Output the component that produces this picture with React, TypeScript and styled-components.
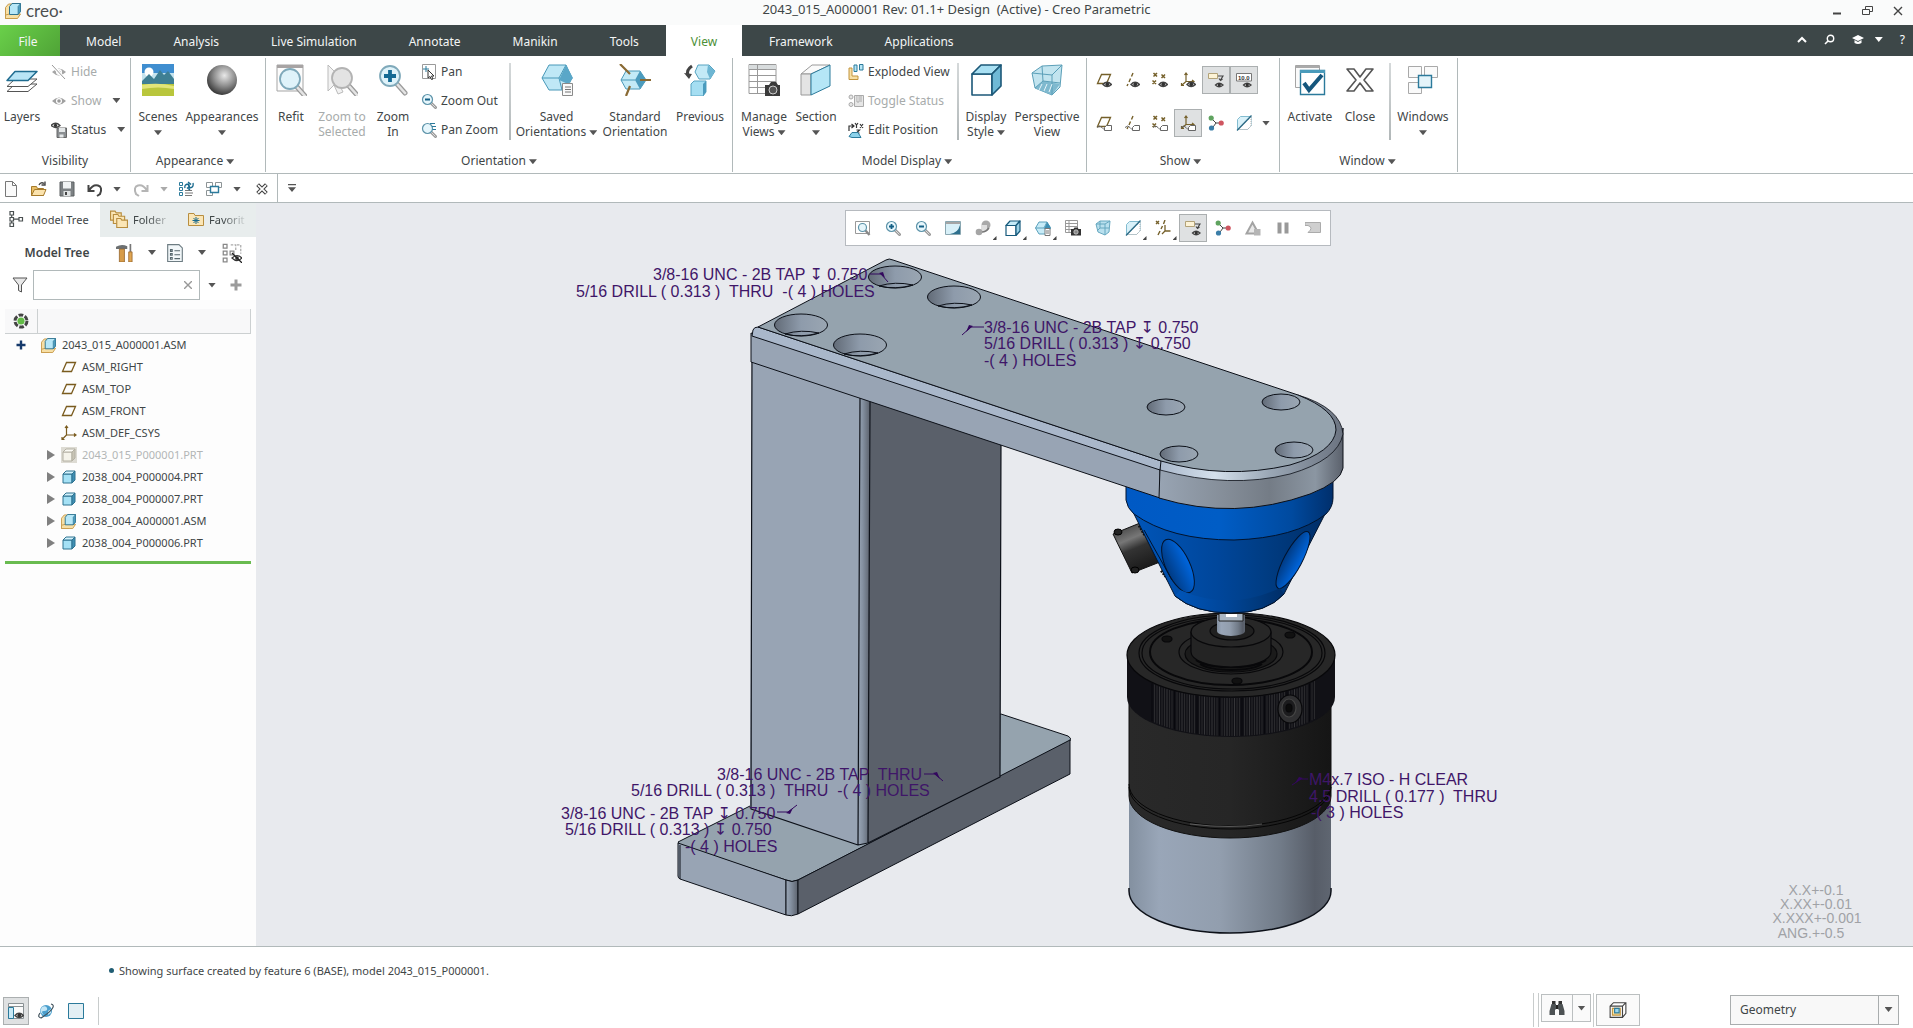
import React from 'react';
import styled, { createGlobalStyle } from 'styled-components';

const ink = '#3f4647';
const line = '#b1b9ba';
const teal = '#2b7a9b';

const GlobalStyle = createGlobalStyle`
  * { box-sizing: border-box; }
  html, body { margin: 0; height: 100%; }
  body {
    font: 12px/15px "Noto Sans", "Open Sans", sans-serif;
    color: ${ink};
    background: #fff;
    overflow: hidden;
  }
  button, input, select { font: inherit; color: inherit; }
  button { border: 0; padding: 0; margin: 0; background: none; cursor: default; }
  svg { display: block; flex: none; }
`;

/* ---------- icons ---------- */

const brown = '#75602a';

const Eye = () => (
  <g>
    <path d="M7 12.5q4-4.500 8.500 0q-4.500 4-8.500 0z" fill="#fff" stroke="#444" strokeWidth="1.4" />
    <circle cx="11.3" cy="12.3" r="1.9" fill="#333" />
  </g>
);
const Tag = () => (
  <g>
    <path d="M8.5 15.5v-3l2-2h5v5z" fill="#fff" stroke="#666" />
    <path d="M1 12.5q3-3 5 0t3 1" fill="none" stroke="#666" />
  </g>
);
const Glass = ({ fill = '#dff3fa', edge = '#7fa9ba' }: { fill?: string; edge?: string }) => (
  <g>
    <path d="M20 20l8 9" stroke="#9a9a9a" strokeWidth="5" strokeLinecap="round" />
    <path d="M20 20l8 9" stroke="#e4e4e4" strokeWidth="2.6" strokeLinecap="round" />
    <circle cx="13" cy="12" r="10" fill={fill} stroke={edge} strokeWidth="1.8" />
  </g>
);
const SmallGlass = () => (
  <g>
    <path d="M10 10l4.500 4.500" stroke="#999" strokeWidth="3" strokeLinecap="round" />
    <path d="M10 10l4.500 4.500" stroke="#ddd" strokeWidth="1" />
    <circle cx="6.500" cy="6.500" r="5" fill="#e6f6fc" stroke="#5c93a9" strokeWidth="1.200" />
  </g>
);
const PlaneMark = () => <path d="M1.500 11.500L5.500 2.500H14.500L10.500 11.500z" fill="none" stroke={brown} strokeWidth="1.300" />;
const AxisMark = () => <path d="M9 1L7.500 4.500M6.500 6.500L5 10M4 12L3 14" stroke={brown} strokeWidth="1.400" />;
const PointsMark = () => (
  <path d="M1.500 1l3.500 3.500m0-3.500l-3.500 3.500M9.500 2.500l3.500 3.500m0-3.500l-3.500 3.500M.5 8.500l3.500 3.500m0-3.500l-3.500 3.500" stroke={brown} strokeWidth="1.500" />
);
const CsysMark = () => (
  <path d="M6 1v8.500h8M6 9.500L1.500 13.500M4.500 3L6 1l1.500 2M12 8l2 1.500-2 1.500M1.500 11v2.500H4" fill="none" stroke={brown} strokeWidth="1.200" />
);
const Cube = ({ front = '#a5e1f5', top = '#d3f2fc', side = '#3f8fb3', edge = '#2f7390' }) => (
  <g stroke={edge} strokeLinejoin="round">
    <path d="M2 5h9v9H2z" fill={front} />
    <path d="M2 5l3-3h9l-3 3z" fill={top} />
    <path d="M11 5l3-3v9l-3 3z" fill={side} />
  </g>
);
const Assembly = () => (
  <g strokeLinejoin="round">
    <path d="M.5 4.500l3-3.500h5v10l-.5 4.500H.5z" fill="#f7dfa5" stroke="#c89b4b" />
    <path d="M.5 12l4-1h11l-3 4.500H.5z" fill="#f7dfa5" stroke="#c89b4b" />
    <path d="M4.500 3.500l2.500-3h8.500v8l-2.500 3H4.500z" fill="#b7e7f7" stroke="#2f7390" />
    <path d="M13 3.500l2.500-3v8l-2.500 3z" fill="#4d9cbd" stroke="#2f7390" strokeWidth=".6" />
  </g>
);
const Nodes = () => (
  <g>
    <path d="M3 3l5 5-4 5.500M8 8h5" fill="none" stroke="#444" />
    <circle cx="3.200" cy="3" r="2.600" fill="#5fa35f" />
    <circle cx="3.500" cy="13" r="2.600" fill="#3b7ea8" />
    <circle cx="13.200" cy="8" r="2.600" fill="#cf5560" />
  </g>
);
const SectionMark = () => (
  <g>
    <path d="M1.500 4.500l3-3H15V11l-3.500 3.500h-10z" fill="#d9f1f9" stroke="#83bcd0" />
    <path d="M2 14.500L15 2v9l-3.500 3.500z" fill="#fff" stroke="#aaa" strokeDasharray="1 1" />
    <path d="M1 15.500L15.500.5" stroke="#2a6a86" strokeWidth="1.300" />
  </g>
);
const Camera = () => (
  <g>
    <path d="M6 9h2.500l1-1.500h3L13.500 9H16v6.500H6z" fill="#333" />
    <circle cx="11" cy="12" r="2.200" fill="#888" stroke="#ddd" strokeWidth=".7" />
  </g>
);
const LowEye = () => (
  <g>
    <path d="M7.500 13q3.500-3.500 7.500 0q-4 3.500-7.500 0z" fill="#fff" stroke="#444" strokeWidth="1.300" />
    <circle cx="11.300" cy="12.900" r="1.600" fill="#333" />
  </g>
);
const DimText = styled.text`
  font: 700 6px "Liberation Sans", sans-serif;
  fill: #333;
`;

const small: Record<string, React.ReactNode> = {
  hide: (
    <g>
      <path d="M1 8q7-7 14 0q-7 7-14 0z" fill="#a5a5a5" />
      <circle cx="8" cy="8" r="3" fill="#fff" />
      <circle cx="8" cy="8" r="1.600" fill="#999" />
      <path d="M1 1l13 14" stroke="#fff" strokeWidth="3" />
      <path d="M1 1l13 14" stroke="#999" />
    </g>
  ),
  show: (
    <g>
      <path d="M1 8q7-7 14 0q-7 7-14 0z" fill="#a0a0a0" />
      <circle cx="8" cy="8" r="3" fill="#fff" />
      <circle cx="8" cy="8" r="1.800" fill="#999" />
    </g>
  ),
  status: (
    <g>
      <path d="M0 3.500q4.500-4.500 9 0q-4.500 4-9 0z" fill="#fff" stroke="#444" strokeWidth="1.300" />
      <circle cx="4.500" cy="3.400" r="1.700" fill="#333" />
      <path d="M6 6h9.500v9.500H6z" fill="#8b8f92" stroke="#666" />
      <path d="M8 6h6v4H8zM8.500 12.500h4v3h-4z" fill="#e4e7e8" />
    </g>
  ),
  pan: (
    <g>
      <path d="M1.500.5h13v14h-13z" fill="#fff" stroke="#9a9a9a" />
      <path d="M5 2v6M2 5h6" stroke={teal} />
      <path d="M7 6v8l2-1.500 1.500 3L12 15l-1.500-3H13z" fill="#fff" stroke="#333" />
    </g>
  ),
  zoomOut: (
    <g>
      <SmallGlass />
      <path d="M4 6.500h5" stroke="#135f85" strokeWidth="2" />
    </g>
  ),
  zoomIn: (
    <g>
      <SmallGlass />
      <path d="M4 6.500h5M6.500 4v5" stroke="#135f85" strokeWidth="1.800" />
    </g>
  ),
  panZoom: (
    <g>
      <SmallGlass />
      <path d="M9 1.500h5M11 4.500h4M11.500 7.500H15" stroke={teal} strokeWidth="1.200" />
    </g>
  ),
  refit: (
    <g>
      <path d="M.5 1.500h14v12H.5z" fill="#fff" stroke="#999" />
      <path d="M10 10l4.500 5" stroke="#888" strokeWidth="2.400" />
      <circle cx="7.500" cy="7.500" r="4" fill="#e6f6fc" stroke="#5c93a9" strokeWidth="1.200" />
    </g>
  ),
  exploded: (
    <g>
      <path d="M1 4h3v8h6v3.500H1z" fill="#f7dfa5" stroke="#c2953f" />
      <path d="M6 1h3v6.500H6zM11.500 0.500H15V6h-3.500z" fill="#b7e6f6" stroke={teal} />
    </g>
  ),
  toggle: (
    <g fill="#e6e6e6" stroke="#aaa">
      <circle cx="3" cy="4" r="2" />
      <circle cx="3" cy="11.500" r="2" />
      <path d="M6.500 2.500h9v11h-9zM9 2.500V9h2V2.500M13 2.500V9" />
    </g>
  ),
  editPosition: (
    <g>
      <path d="M1 9V4h4M3.500 2L6 4 3.500 6" fill="none" stroke="#333" strokeWidth="1.200" />
      <path d="M7 1l1.500 2L10 1M8.500 3v3M12 2l3 4m0-4l-3 4M8.500 8h3l-3 3h3" fill="none" stroke="#333" strokeWidth="1.200" />
      <path d="M1 14.500l3-4h6l3 5H4z" fill="#8dd2ea" stroke={teal} />
    </g>
  ),
  planeEye: <g><PlaneMark /><Eye /></g>,
  axisEye: <g><AxisMark /><Eye /></g>,
  pointsEye: <g><PointsMark /><Eye /></g>,
  csysEye: <g><CsysMark /><Eye /></g>,
  noteEye: (
    <g>
      <path d="M.5 1.500h9v5h-9z" fill="#fdf3d6" stroke="#b3a379" />
      <path d="M10 4h5l-2.500 4M11 6.500l1.500 2 2-1.500" fill="none" stroke="#444" strokeWidth="1.200" />
      <LowEye />
    </g>
  ),
  dimEye: (
    <g>
      <path d="M.5 1.500h15v7.500H.5z" fill="#fff" stroke="#777" />
      <DimText x="2" y="7.500">10.0</DimText>
      <LowEye />
    </g>
  ),
  planeTag: <g><PlaneMark /><Tag /></g>,
  axisTag: <g><AxisMark /><Tag /></g>,
  pointsTag: <g><PointsMark /><Tag /></g>,
  csysTag: <g><CsysMark /><Tag /></g>,
  nodes: <Nodes />,
  section: <SectionMark />,
  repaint: (
    <g>
      <path d="M.5 1.500h15v13H.5z" fill="#d8f0f8" stroke="#8aa7b1" />
      <path d="M1 2h14v2H1z" fill="#a5a5a5" />
      <path d="M5 14q8-1 10-9v9z" fill="#2d6f8d" />
    </g>
  ),
  shading: (
    <g>
      <circle cx="11" cy="5" r="4.500" fill="#a9a9a9" />
      <path d="M6 5h6v6H6z" fill="#dedede" />
      <circle cx="4" cy="12" r="3.300" fill="#a5a5a5" />
      <path d="M7 12q4 0 7-4" stroke="#777" strokeWidth="1.500" fill="none" />
    </g>
  ),
  cubeLine: (
    <g stroke="#175a7c" strokeWidth="1.200" strokeLinejoin="round">
      <path d="M1 5.500h10v10H1z" fill="#fff" />
      <path d="M1 5.500l4-4.500h10l-4 4.500z" fill="#c5ebf8" />
      <path d="M11 5.500L15 1v10l-4 4.500z" fill="#9bd1e6" />
    </g>
  ),
  hexPage: (
    <g>
      <path d="M4 2h8l3.500 6-3.500 6H4L.5 8z" fill="#c7ebf7" stroke="#5aa0bb" />
      <path d="M12 2l3.500 5V9H9z" fill="#3f8fb3" />
      <path d="M.5 8H9l3-6" fill="none" stroke="#5aa0bb" />
      <path d="M10 8.500h5v7h-5z" fill="#fff" stroke="#777" />
      <path d="M11 11h3M11 13h3" stroke="#777" />
    </g>
  ),
  manage: (
    <g>
      <path d="M.5.5h12v12H.5zM.5 3.500h12M.5 6.500h12M.5 9.500h12M4 .5v12" fill="#fff" stroke="#999" />
      <Camera />
    </g>
  ),
  perspective: (
    <g stroke="#67a8c0">
      <path d="M1 4l4-3h10l-1 11-4 3-7-3z" fill="#b9e0ee" />
      <path d="M1 4h9l5-3M10 4v11M5 1v7l-3 3M5 8h9" fill="none" />
    </g>
  ),
  datum: (
    <g>
      <path d="M1 1l3 3m0-3L1 4M10 0L8.500 4M7.500 6L6 9M5 11l-2 4" stroke={brown} strokeWidth="1.400" />
      <path d="M10 5v6h5.500M10 11l-3 3" fill="none" stroke={brown} strokeWidth="1.300" />
    </g>
  ),
  tri: (
    <g>
      <path d="M7.500 2.500l6 11h-12z" fill="#e8e8e8" stroke="#a3a3a3" strokeWidth="2" />
      <path d="M9 9h6.500v6.500H9z" fill="#b5b5b5" />
    </g>
  ),
  pause: <path d="M2.500 2.500h4v11h-4zM9.500 2.500h4v11h-4z" fill="#999" />,
  resume: <path d="M0 2.500h15.500v10H3q6-5 0-7H0z" fill="#cfcfcf" stroke="#ababab" />,
  new: <path d="M2.500.5h7l4 4v11h-11zM9.500.5v4h4" fill="#fafafa" stroke="#777" />,
  open: (
    <g>
      <path d="M.5 14.500v-9h5l1 2h6v7z" fill="#e9bf68" stroke="#a67b2c" />
      <path d="M.5 14.500l3-6H15l-2.500 6z" fill="#fbe3ae" stroke="#a67b2c" />
      <path d="M8 4q2-3.500 5-1.500M14 .5V4h-3.500" fill="none" stroke="#444" strokeWidth="1.400" />
    </g>
  ),
  save: (
    <g>
      <path d="M1 1h14v14H1z" fill="#7d8184" stroke="#5c6063" />
      <path d="M4 1h8v6.500H4z" fill="#f1f3f4" />
      <path d="M4.500 10h7v5h-7z" fill="#dfe2e3" />
      <path d="M6 11h2v3H6z" fill="#444" />
    </g>
  ),
  undo: <path d="M1.500 4v6h6M2 9.500Q6 3 11 4.500t2 8.500L10 15" fill="none" stroke="#444" strokeWidth="2" />,
  redo: <path d="M14.500 4v6h-6M14 9.500Q10 3 5 4.500T3 13l3 2" fill="none" stroke="#b5b5b5" strokeWidth="2" />,
  regen: (
    <g>
      <path d="M1.500 1.500h3v3h-3zM1.500 6.500h3v3h-3zM1.500 11.500h3v3h-3z" fill="#fff" stroke={teal} />
      <path d="M7 9.500h7M7 12h8M7 14.500h7" stroke="#777" />
      <path d="M7 7q-1-4 4-4M10 1l2.500 2L10 5M15 2q1 5-4 5M12 5L9.500 7 12 9" fill="none" stroke="#17688d" strokeWidth="1.300" />
    </g>
  ),
  windows: (
    <g fill="#fff">
      <path d="M.5 1.500h6v5h-6zM9.500 1.500h6v5h-6zM.5 9.500h6v5h-6z" stroke="#8d9496" />
      <path d="M4.500 5.500h8v6h-8z" stroke={teal} strokeWidth="1.400" />
    </g>
  ),
  closeX: (
    <g>
      <path d="M3 3l10 10M13 3L3 13" stroke="#444" strokeWidth="4.500" />
      <path d="M3.500 3.500l9 9M12.500 3.500l-9 9" stroke="#fff" strokeWidth="2" />
    </g>
  ),
  treeTab: (
    <path d="M2 .5h3.500V4H2zM2 6.500h3.500V10H2zM2 12h3.500v3.500H2zM11 6.500h3.500V10H11zM5.500 8.200H11M3.700 4v2.500M3.700 10v2" fill="none" stroke="#4a5051" strokeWidth="1.200" />
  ),
  folders: (
    <g fill="#fbe6b6" stroke="#b88e3f">
      <path d="M.5 9V1h4l1 1.500H10V9z" />
      <path d="M3 12V4h4l1 1.500h5V12z" />
      <path d="M6 15.500V7.500h3.500l1 1.500h5v6.500z" />
    </g>
  ),
  favorites: (
    <g>
      <path d="M.5 14.500v-12H6l1 2h8.500v10z" fill="#fbe6b6" stroke="#b88e3f" />
      <path d="M8 6v7M4.500 9.500h7M5.500 7l5 5M10.500 7l-5 5" stroke="#17688d" />
    </g>
  ),
  funnel: <path d="M1 1h14L9.500 8v7l-3-1.500V8z" fill="#e8e8e8" stroke="#555" />,
  plus: <path d="M8 2.500v11M2.500 8h11" stroke="#9b9b9b" strokeWidth="3" />,
  plusBlue: <path d="M8 3.500v9M3.500 8h9" stroke="#15396b" strokeWidth="2.400" />,
  tools: (
    <g>
      <path d="M0 2.500q5-3 10-.5v2.500H0z" fill="#6c7072" />
      <path d="M3 4.500h4.500V16H3z" fill="#d79c49" stroke="#95642a" strokeWidth=".7" />
      <path d="M12.800 0v7" stroke="#777" strokeWidth="1.500" />
      <path d="M11.300 7h3v9h-3z" fill="#e0a652" stroke="#95642a" strokeWidth=".7" />
    </g>
  ),
  listPage: (
    <g>
      <path d="M1.500.5h10l3 3v12h-13z" fill="#f2f7f9" stroke="#6d7c82" />
      <path d="M4 5h1.500v1.500H4zM4 8.500h1.500V10H4zM4 12h1.500v1.500H4zM7.500 6h5M7.500 9.500h5M7.500 13h5" fill="none" stroke="#56676d" />
    </g>
  ),
  treeEye: (
    <g>
      <path d="M1 1h3v3H1zM1 6.500h3v3H1zM1 12h3v3H1zM6.500 6.500h3v3h-3z" fill="none" stroke="#888" />
      <path d="M7 1.500h4v5M12 1.500h3v7" fill="none" stroke="#aaa" strokeDasharray="2 1" />
      <path d="M8 12q4-4 8 0q-4 4-8 0z" fill="#fff" stroke="#333" />
      <circle cx="12" cy="12" r="1.500" fill="#333" />
      <path d="M8 8l8 8" stroke="#222" />
    </g>
  ),
  gear: (
    <g>
      <circle cx="8" cy="8" r="6" fill="none" stroke="#444" strokeWidth="3" strokeDasharray="4.700 1.580" />
      <circle cx="8" cy="8" r="3.600" fill="#62bb46" />
    </g>
  ),
  assembly: <Assembly />,
  part: <Cube />,
  partOff: (
    <g>
      <path d="M0 0h16v16H0z" fill="#dddbd3" />
      <Cube front="#f5f3ea" top="#fbfaf4" side="#c8c4b5" edge="#b3b0a3" />
    </g>
  ),
  plane: <path d="M1.500 12.500L5.500 3.500H14.500L10.500 12.500z" fill="none" stroke="#7a5b1e" strokeWidth="1.300" />,
  csys: (
    <path d="M5.500 1v9H15M5.500 10L1 14.500M4 3l1.500-2L7 3M13 8.500l2 1.500-2 1.500M1 12v2.500h2.500" fill="none" stroke="#7a5b1e" strokeWidth="1.200" />
  ),
  panelEye: (
    <g>
      <path d="M.5.5h15v15H.5z" fill="#fafafa" stroke="#8a9194" />
      <path d="M.5 3.500h15" stroke="#8a9194" />
      <path d="M.5 4.500h5v11h-5z" fill="#c8e9f6" stroke={teal} />
      <Eye />
    </g>
  ),
  globe: (
    <g>
      <circle cx="8" cy="8" r="6" fill="#4b9fcd" />
      <path d="M4 4q4-2 5 1t-3 3 0 4q-4-2-3.500-5zM10 8l3-2v4l-3 2z" fill="#c4e6f5" />
      <path d="M13 1q4 1 1 5T3 15q-4-1-1-5" fill="none" stroke="#3e4f5a" strokeWidth="1.200" />
    </g>
  ),
  blank: <path d="M.5.5h15v15H.5z" fill="#e3eff4" stroke={teal} />,
  binoculars: (
    <g>
      <path d="M3 1h3.500v3H3zM9.500 1H13v3H9.500z" fill="#333" />
      <path d="M2.500 4h4.500v5.500h-1V15H.5v-4zM13.500 4H9v5.500h1V15h5.500v-4z" fill="#4d5254" />
      <path d="M7 5h2v4H7z" fill="#222" />
    </g>
  ),
  boxFilter: (
    <g>
      <path d="M1 4.500l3-3h11V11l-3 3.500H1zM12 14.500V4.500H1M12 4.500l3-3" fill="#fff" stroke="#444" />
      <path d="M3 6.500h7v6H3z" fill="#fbe0a0" stroke="#c2953f" />
      <path d="M5 6.500h4v4H5z" fill="#9bd7ee" stroke={teal} />
    </g>
  ),
};

const large: Record<string, React.ReactNode> = {
  layers: (
    <g strokeLinejoin="round">
      <path d="M1 27.500L9 20h22l-9 7.500z" fill="#fff" stroke="#555" />
      <path d="M1 22.500L9 15h22l-9 7.500z" fill="#fff" stroke="#555" />
      <path d="M1 16.500L9 7.500h22l-9 9z" fill="#b9e5f6" stroke="#1f6c90" strokeWidth="1.500" />
    </g>
  ),
  scenes: (
    <g>
      <path d="M0 0h32v32H0z" fill="#3f8ed0" />
      <path d="M0 9h32v12H0z" fill="#c5e3ee" />
      <circle cx="7" cy="8" r="4.500" fill="#fff" />
      <path d="M0 17l7-7 5 5 6-9 4 5 4-4 6 8v7H0z" fill="#3f7f93" />
      <path d="M0 20h32v12H0z" fill="#b9c63c" />
      <path d="M0 21q16-3 32 1v3q-16-3-32 0z" fill="#e2e579" />
    </g>
  ),
  sphere: <circle cx="16" cy="16" r="15" fill="url(#ball)" />,
  refit: (
    <g>
      <path d="M2 1h26v26H2z" fill="#fcfcfc" stroke="#a5a5a5" />
      <path d="M2 1h26v3H2z" fill="#a7a3a3" />
      <g transform="translate(2 3)"><Glass /></g>
    </g>
  ),
  zoomSel: (
    <g>
      <path d="M2 1v26l6-6 4 9 5-2-4-8h8z" fill="#f2f2f2" stroke="#bbb" />
      <g transform="translate(3 2)"><Glass fill="#e3e3e3" edge="#b3b3b3" /></g>
    </g>
  ),
  zoomIn: (
    <g>
      <Glass />
      <path d="M13 6v12M7 12h12" stroke="#156a94" strokeWidth="3.800" />
    </g>
  ),
  saved: (
    <g strokeLinejoin="round">
      <path d="M8 1h17l6 13-6 12H8L1 14z" fill="#bfe8f6" stroke="#4898b8" />
      <path d="M1 14h17l7-13M18 14l3 12" fill="none" stroke="#4898b8" />
      <path d="M25 1l7 13-5 6-9-4z" fill="#5aa7c8" />
      <path d="M21.500 19.500h10v12h-10z" fill="#fafafa" stroke="#8a8a8a" />
      <path d="M24 23h6M24 25.500h6M24 28h6" stroke="#777" />
    </g>
  ),
  standard: (
    <g strokeLinejoin="round">
      <path d="M7 7h14l6 9-6 9H7l-5-9z" fill="#c3eaf7" stroke="#4898b8" />
      <path d="M21 7l6 9-6 9-5-9z" fill="#4b9bbd" />
      <path d="M2 16h14" stroke="#4898b8" />
      <path d="M1 0l10 10M21 16h11M11 22L7 32" stroke="#8a6a34" strokeWidth="2.200" />
    </g>
  ),
  previous: (
    <g strokeLinejoin="round">
      <path d="M14 1h11l6 6-5 8H15l-4-7z" fill="#c3eaf7" stroke="#56a3c1" />
      <path d="M24 1l7 6-5 8-3-7z" fill="#6db6d3" />
      <path d="M7 20l3-3h12v11l-3 4H7z" fill="#a5def2" stroke="#56a3c1" />
      <path d="M19 20l3-3v11l-3 4z" fill="#4b9bbd" />
      <path d="M8 2q-6 4-4 9" fill="none" stroke="#444" strokeWidth="3" />
      <path d="M0 9l8 1-3 5z" fill="#444" />
    </g>
  ),
  manage: (
    <g>
      <path d="M1 .5h27v29H1z" fill="#fff" stroke="#999" />
      <path d="M1 1h27v4H1z" fill="#d8dcdd" />
      <path d="M1 5.500h27M1 11.500h27M1 17.500h27M1 23.500h27M9.500 1v29" stroke="#999" />
      <path d="M17 21h4l2-3h5l2 3h2v11H17z" fill="#3b3b3b" />
      <circle cx="25" cy="26" r="4" fill="#555" stroke="#ccc" />
    </g>
  ),
  section: (
    <g strokeLinejoin="round">
      <path d="M1 10L12 1h18L11 10z" fill="#fafafa" stroke="#999" />
      <path d="M1 10h10v21H1z" fill="#e4e4e4" stroke="#999" />
      <path d="M11 10L30 1v21L11 31z" fill="#b5e6f6" stroke={teal} />
    </g>
  ),
  display: (
    <g stroke="#1c5878" strokeWidth="1.600" strokeLinejoin="round">
      <path d="M2 10h20v21H2z" fill="#fff" />
      <path d="M2 10l9-9h20l-9 9z" fill="#a9e0f3" />
      <path d="M22 10l9-9v21l-9 9z" fill="#6fb9d6" />
    </g>
  ),
  perspective: (
    <g strokeLinejoin="round">
      <path d="M1 9L11 2l20-1-2 22-8 8L4 24z" fill="#c2e4ef" stroke="#5b9fb8" />
      <path d="M4 24l8-7 17 3-8 11z" fill="#7fb9cf" />
      <path d="M1 9l20 2L31 1M21 11v20M11 2l1 15-8 7M12 17l17 2" fill="none" stroke="#5b9fb8" />
      <path d="M11 20l-3 6M16 20l-3 7M21 20l-3 8" stroke="#e7f5fa" />
    </g>
  ),
  activate: (
    <g>
      <path d="M1.500 1.500h24v22h-24z" fill="#fafafa" stroke="#a5a5a5" />
      <path d="M2 2h23v2H2z" fill="#aaa" />
      <path d="M6.500 6.500h24v24h-24z" fill="#fff" stroke={teal} strokeWidth="1.400" />
      <path d="M6 6h25v3H6z" fill="#4a9bbb" />
      <path d="M10 19l5 7L28 11" fill="none" stroke="#15567c" strokeWidth="4" />
    </g>
  ),
  close: (
    <path d="M3 5h7l6 8 6-8h7l-9 11 9 11h-7l-6-8-6 8H3l9-11z" fill="#fff" stroke="#555" strokeWidth="1.600" strokeLinejoin="round" />
  ),
  windows: (
    <g fill="#fafafa">
      <path d="M1.500 2.500h13v11h-13zM17.500 2.500h13v11h-13zM1.500 18.500h13v11h-13z" stroke="#a9a9a9" />
      <path d="M11.500 11.500h13v12h-13z" fill="#e4f4fa" stroke={teal} strokeWidth="1.400" />
    </g>
  ),
};

const Small = ({ name, size = 16 }: { name: string; size?: number }) => (
  <svg width={size} height={size} viewBox="0 0 16 16" aria-hidden="true">
    {small[name]}
  </svg>
);
const Large = ({ name }: { name: string }) => (
  <svg width="32" height="32" viewBox="0 0 32 32" aria-hidden="true">
    <defs>
      <radialGradient id="ball" cx=".58" cy=".35" r=".65">
        <stop offset="0" stopColor="#e8e8e8" />
        <stop offset=".55" stopColor="#8d8d8d" />
        <stop offset="1" stopColor="#3a3a3a" />
      </radialGradient>
    </defs>
    {large[name]}
  </svg>
);

/* ---------- shared parts ---------- */

const Caret = styled.span<{ $dim?: boolean; $inline?: boolean }>`
  display: inline-block;
  flex: none;
  width: 8px;
  height: 5px;
  margin-left: ${(p) => (p.$inline ? '3px' : '0')};
  vertical-align: middle;
  background: ${(p) => (p.$dim ? '#aaa' : '#555')};
  clip-path: polygon(0 0, 100% 0, 50% 100%);
`;

const Page = styled.div`
  display: flex;
  flex-direction: column;
  height: 100vh;
`;

/* ---------- title and tabs ---------- */

const TitleBar = styled.header`
  display: grid;
  grid-template-columns: 1fr auto 1fr;
  height: 25px;
  background: #fafbfb;
`;
const Brand = styled.div`
  display: flex;
  align-items: center;
  gap: 5px;
  padding-left: 5px;
  padding-bottom: 4px;
  font: 17px/20px "Lato", sans-serif;
  color: #4d4f51;
`;
const Title = styled.h1`
  margin: 0;
  padding-top: 2px;
  font-size: 13px;
  font-weight: 400;
  white-space: pre;
`;
const WindowButtons = styled.div`
  display: flex;
  justify-content: flex-end;
  gap: 20px;
  padding: 5px 10px 8px 0;
`;
const IconButton = styled.button`
  display: flex;
  align-items: center;
  justify-content: center;
`;

const TabBar = styled.nav`
  display: flex;
  height: 31px;
  background: #3d4748;
`;
const Tab = styled.button<{ $kind?: 'file' | 'active' }>`
  min-width: 60px;
  padding: ${(p) => (p.$kind === 'file' ? '2px 4px 0 0' : '2px 25px 0')};
  margin-right: ${(p) => (p.$kind === 'file' ? 1 : 2)}px;
  color: ${(p) => (p.$kind === 'active' ? '#4c8f37' : '#f3f5f5')};
  background: ${(p) =>
    p.$kind === 'file' ? 'linear-gradient(135deg, #6ad04a, #4fa336)' : p.$kind === 'active' ? '#fff' : 'none'};
`;
const TabTools = styled.div`
  display: flex;
  align-items: center;
  gap: 17px;
  margin-left: auto;
  padding-right: 8px;
  padding-bottom: 2px;
  color: #fff;
`;
const WhiteCaret = styled(Caret)`
  background: #fff;
  margin: 0 0 0 -6px;
`;

/* ---------- ribbon ---------- */

const Ribbon = styled.section`
  display: flex;
  height: 118px;
  padding-bottom: 1px;
  border-bottom: 1px solid ${line};
`;
const GroupBox = styled.div<{ $end: number }>`
  display: flex;
  flex-direction: column;
  border-right: 1px solid ${line};
  margin-top: 2px;
  padding-right: ${(p) => p.$end}px;
`;
const GroupBody = styled.div`
  display: flex;
  flex: 1;
`;
const GroupName = styled.div`
  height: 19px;
  text-align: center;
  line-height: 15px;
`;
const BigButton = styled.button<{ $w: number }>`
  display: flex;
  flex-direction: column;
  align-items: center;
  justify-content: flex-start;
  gap: 13px;
  width: ${(p) => p.$w}px;
  padding-top: 6px;
  white-space: nowrap;
  &:disabled { color: #a7abab; }
`;
const Stack = styled.div<{ $w: number; $left: number }>`
  display: flex;
  flex-direction: column;
  width: ${(p) => p.$w}px;
  padding-left: ${(p) => p.$left}px;
`;
const RowButton = styled.button`
  display: flex;
  align-items: center;
  gap: 4px;
  height: 29px;
  padding-bottom: 2px;
  white-space: nowrap;
  &:disabled { color: #a7abab; }
`;
const RowCaret = styled(Caret)`
  margin-left: 7px;
`;
const Divider = styled.div<{ $left?: number }>`
  width: 2px;
  height: 77px;
  margin-top: 5px;
  margin-left: ${(p) => p.$left ?? 0}px;
  background: linear-gradient(#d5d9da, #b1b7b8);
`;
const ShowGrid = styled.div`
  display: grid;
  grid-template-columns: repeat(6, 28px) 16px;
  grid-auto-rows: 28px;
  align-items: center;
  align-content: start;
  row-gap: 15px;
  padding: 8px 0 0 3px;
`;
const Toggle = styled.button<{ $on?: boolean; $size?: number }>`
  position: relative;
  display: flex;
  align-items: center;
  justify-content: center;
  width: ${(p) => p.$size ?? 28}px;
  height: ${(p) => p.$size ?? 28}px;
  border: 1px solid ${(p) => (p.$on ? '#abafb0' : 'transparent')};
  background: ${(p) => (p.$on ? '#dfe1e2' : 'transparent')};
`;

type BigProps = { icon: string; w: number; lines: string[]; menu?: boolean; off?: boolean };
const Big = ({ icon, w, lines, menu, off }: BigProps) => (
  <BigButton $w={w} disabled={off}>
    <Large name={icon} />
    <span>
      {lines[0]}
      {(lines[1] || menu) && <br />}
      {lines[1]}
      {menu && <Caret $inline={!!lines[1]} />}
    </span>
  </BigButton>
);
const Group = ({ name, menu, end = 0, children }: { name: string; menu?: boolean; end?: number; children: React.ReactNode }) => (
  <GroupBox $end={end}>
    <GroupBody>{children}</GroupBody>
    <GroupName>
      {name}
      {menu && <Caret $inline />}
    </GroupName>
  </GroupBox>
);

/* ---------- quick access ---------- */

const QuickBar = styled.div`
  display: flex;
  align-items: center;
  height: 29px;
  padding-left: 3px;
  border-bottom: 1px solid ${line};
`;
const QuickButton = styled(IconButton)<{ $w: number }>`
  width: ${(p) => p.$w}px;
  height: 28px;
  padding-top: 2px;
`;
const QuickEnd = styled.div`
  display: flex;
  align-items: center;
  height: 28px;
  margin-left: 6px;
  padding-left: 10px;
  border-left: 1px solid ${line};
`;
const Overflow = styled(Caret)`
  height: 8px;
  clip-path: polygon(0 0, 100% 0, 100% 15%, 0 15%, 0 40%, 100% 40%, 50% 100%, 0 40%);
`;

/* ---------- side panel ---------- */

const Main = styled.main`
  display: flex;
  flex: 1;
  min-height: 0;
`;
const Side = styled.aside`
  display: flex;
  flex-direction: column;
  width: 256px;
  flex: none;
  background: #fdfdfd;
`;
const SideTabs = styled.div`
  display: flex;
  height: 34px;
  background: #e8eded;
  font-size: 11px;
`;
const SideTab = styled.button<{ $w: number; $on?: boolean }>`
  display: flex;
  align-items: center;
  gap: ${(p) => (p.$on ? 7 : 5)}px;
  width: ${(p) => p.$w}px;
  padding-left: ${(p) => (p.$on ? 8 : 10)}px;
  padding-bottom: 2px;
  white-space: nowrap;
  background: ${(p) => (p.$on ? '#fff' : 'none')};
  mask-image: ${(p) => (p.$on ? 'none' : 'linear-gradient(90deg, #000 60%, transparent 95%)')};
`;
const TreeHead = styled.div`
  display: grid;
  grid-template-columns: 90px 54px 50px 50px;
  align-items: center;
  height: 33px;
  padding-left: 12px;
  padding-bottom: 2px;
  background: #fff;
`;
const HeadTool = styled.div`
  display: flex;
  align-items: center;
  justify-content: flex-end;
  gap: 14px;
`;
const TreeTitle = styled.h2`
  margin: 0;
  text-align: center;
  font-size: 12px;
  font-weight: 600;
`;
const Search = styled.div`
  display: grid;
  grid-template-columns: 26px 167px 24px 1fr;
  align-items: center;
  justify-items: center;
  height: 30px;
  padding: 0 8px 0 7px;
  background: #fff;
`;
const Field = styled.label`
  display: flex;
  align-items: center;
  width: 100%;
  height: 30px;
  padding: 0 7px;
  border: 1px solid ${line};
  input { flex: 1; min-width: 0; border: 0; outline: 0; background: none; }
`;
const TreeTop = styled.div`
  display: flex;
  height: 25px;
  margin: 9px 5px 0;
  border: solid #ccd0d1;
  border-width: 0 1px 1px 0;
  background: #f8f8f9;
  span { display: flex; align-items: center; justify-content: center; width: 33px; border-right: 1px solid #ccd0d1; }
`;
const Tree = styled.ul`
  margin: 0 5px;
  padding: 0 0 7px;
  list-style: none;
  font-size: 11px;
  border-bottom: 3px solid #69bb50;
`;
const TreeRow = styled.li<{ $deep?: boolean; $dim?: boolean }>`
  display: grid;
  grid-template-columns: ${(p) => (p.$deep ? '42px 14px 16px' : '24px 12px 16px')} 1fr;
  align-items: center;
  height: 22px;
  color: ${(p) => (p.$dim ? '#b3b6b6' : ink)};
  white-space: nowrap;
`;
const Twist = styled.span`
  width: 8px;
  height: 10px;
  background: #808080;
  clip-path: polygon(0 0, 100% 50%, 0 100%);
`;
const RootMark = styled.span`
  margin-left: 8px;
`;
const Name = styled.span`
  padding-left: 5px;
  padding-bottom: 2px;
`;

/* ---------- graphics area ---------- */

const Stage = styled.section`
  position: relative;
  flex: 1;
  min-width: 0;
  overflow: hidden;
  background: #e8eaee;
`;
const Scene = styled.svg`
  width: 100%;
  height: 100%;
`;
const FloatBar = styled.div`
  position: absolute;
  top: 7px;
  left: 50%;
  display: flex;
  align-items: center;
  gap: 2px;
  height: 36px;
  padding: 0 3px;
  transform: translateX(-240px);
  border: 1px solid #b6babf;
  background: #fff;
`;
const Corner = styled.span`
  position: absolute;
  right: -1px;
  bottom: 1px;
  width: 4px;
  height: 4px;
  background: #444;
  clip-path: polygon(100% 0, 100% 100%, 0 100%);
`;
const Note = styled.text`
  font: 16px "Liberation Sans", "DejaVu Sans", sans-serif;
  fill: #3f1668;
  white-space: pre;
`;
const Tolerance = styled.text`
  font: 14px "Liberation Sans", sans-serif;
  fill: #a0a2a6;
  text-anchor: middle;
`;

const edge = '#0c1018';
const holes = [
  [895, 277], [954, 297], [801, 325], [860, 345],
];
const smallHoles = [
  [1166, 407], [1281, 402], [1179, 454], [1294, 450],
];
const notes: [number, number, string][] = [
  [653, 280, '3/8-16 UNC - 2B TAP ↧ 0.750'],
  [576, 297, '5/16 DRILL ( 0.313 )  THRU  -( 4 ) HOLES'],
  [984, 333, '3/8-16 UNC - 2B TAP ↧ 0.750'],
  [984, 349, '5/16 DRILL ( 0.313 ) ↧ 0.750'],
  [984, 366, '-( 4 ) HOLES'],
  [717, 780, '3/8-16 UNC - 2B TAP  THRU'],
  [631, 796, '5/16 DRILL ( 0.313 )  THRU  -( 4 ) HOLES'],
  [561, 819, '3/8-16 UNC - 2B TAP ↧ 0.750'],
  [565, 835, '5/16 DRILL ( 0.313 ) ↧ 0.750'],
  [685, 852, '-( 4 ) HOLES'],
  [1309, 785, 'M4x.7 ISO - H CLEAR'],
  [1309, 802, '4.5 DRILL ( 0.177 )  THRU'],
  [1311, 818, '-( 3 ) HOLES'],
];
const knurls = Array.from({ length: 66 }, (_, i) => {
  const x = 1152 + i * 2.5;
  const dip = 42 * Math.sqrt(1 - ((x - 1231) / 104) ** 2);
  return { x, top: 656 + dip, bottom: 694 + dip, tone: i % 9 === 0 ? '#08080c' : i % 3 ? '#2d2d2f' : '#3a3a3c' };
});

const Model = () => (
  <Scene viewBox="256 203 1657 743" role="img" aria-label="Assembly model">
    <defs>
      <linearGradient id="hole"><stop offset="0" stopColor="#626b77" /><stop offset=".5" stopColor="#8e9bab" /><stop offset="1" stopColor="#9aa6b2" /></linearGradient>
      <linearGradient id="strip"><stop offset="0" stopColor="#9aa6b6" /><stop offset=".4" stopColor="#8490a0" /><stop offset="1" stopColor="#5c626d" /></linearGradient>
      <linearGradient id="rim"><stop offset="0" stopColor="#98a4b3" /><stop offset=".35" stopColor="#858e99" /><stop offset=".6" stopColor="#747c86" /><stop offset=".85" stopColor="#8b96a2" /><stop offset="1" stopColor="#5b616c" /></linearGradient>
      <linearGradient id="fillet"><stop offset="0" stopColor="#a9b7ca" /><stop offset=".3" stopColor="#d4e0ec" /><stop offset=".6" stopColor="#9aa7b5" /><stop offset="1" stopColor="#6b7380" /></linearGradient>
      <linearGradient id="blueRing"><stop offset="0" stopColor="#0059c4" /><stop offset=".45" stopColor="#005dc6" /><stop offset=".8" stopColor="#004a9f" /><stop offset="1" stopColor="#002f6c" /></linearGradient>
      <linearGradient id="blueCone"><stop offset="0" stopColor="#0055b8" /><stop offset=".45" stopColor="#00469a" /><stop offset=".7" stopColor="#003c82" /><stop offset="1" stopColor="#002e68" /></linearGradient>
      <linearGradient id="flute"><stop offset="0" stopColor="#003a82" /><stop offset="1" stopColor="#0067e0" /></linearGradient>
      <linearGradient id="can"><stop offset="0" stopColor="#8390a0" /><stop offset=".15" stopColor="#99a6b8" /><stop offset=".45" stopColor="#929eae" /><stop offset=".75" stopColor="#717b88" /><stop offset=".92" stopColor="#575d68" /><stop offset="1" stopColor="#5f6671" /></linearGradient>
      <linearGradient id="darkCan"><stop offset="0" stopColor="#292929" /><stop offset=".5" stopColor="#262626" /><stop offset="1" stopColor="#151515" /></linearGradient>
      <linearGradient id="plug" x1="0" y1="0" x2=".4" y2="1"><stop offset="0" stopColor="#2f2f2f" /><stop offset=".4" stopColor="#777" /><stop offset=".6" stopColor="#333" /><stop offset="1" stopColor="#1b1b1b" /></linearGradient>
    </defs>

    {/* base plate */}
    <g stroke={edge} strokeLinejoin="round">
      <path d="M678 842L750 806L1001 714L1068 736Q1072 738 1070 741L798 880Q792 883 786 880L680 845Z" fill="#95a3ae" />
      <path d="M678 843L786 880V915L680 879Q678 878 678 876Z" fill="#98a4b4" />
      <path d="M786 880Q792 883 798 880V914Q791 917 786 915Z" fill="url(#strip)" />
      <path d="M798 880L1070 740V774L798 914Z" fill="#5a606a" />
      <path d="M680 845V879" />
    </g>

    {/* column */}
    <g strokeLinejoin="round">
      <path d="M752 340L860 390L858 845L750 809Z" fill="#98a4b4" />
      <path d="M860 390L870 395L868 843L858 845Z" fill="url(#strip)" />
      <path d="M870 395L1001 440L1000 777L868 843Z" fill="#5a606a" />
      <path d="M752 340L751 809L858 845L868 843L1000 777L1001 440M860 395L858 845M870 400L868 843" fill="none" stroke={edge} strokeWidth="1.200" />
    </g>

    {/* blue sensor head */}
    <path d="M1113 534L1140 523L1160 562L1132 573Z" fill="url(#plug)" stroke="#111" />
    <ellipse cx="1118" cy="532" rx="4" ry="3" fill="#222" stroke="#000" />
    <ellipse cx="1135" cy="570" rx="4" ry="3" fill="#222" stroke="#000" />
    <path d="M1140 525l6 10M1162 570l8 10" stroke="#111" strokeWidth="5" strokeDasharray="2 1" />
    <g stroke="#02132c" strokeLinejoin="round">
      <path d="M1133 512L1175 596Q1195 613 1231 613Q1267 613 1284 594L1325 514Z" fill="url(#blueCone)" />
      <path d="M1126 480V500Q1127 508 1134 514Q1170 540 1234 540Q1295 538 1326 514Q1333 507 1333 498V470Z" fill="url(#blueRing)" />
      <ellipse cx="1178" cy="566" rx="12" ry="29" transform="rotate(-25 1178 566)" fill="url(#flute)" />
      <ellipse cx="1293" cy="560" rx="9" ry="32" transform="rotate(28 1293 560)" fill="url(#flute)" />
      <path d="M1144 530L1172 580" fill="none" />
    </g>

    {/* arm */}
    <g stroke={edge} strokeLinejoin="round">
      <path d="M751 333L1160 468V498L751 362Z" fill="#98a4b4" />
      <path d="M1160 468Q1225 486 1280 474Q1343 458 1343 428V468Q1341 482 1310 494Q1235 521 1159 498Z" fill="url(#rim)" />
      <path d="M1160 461L1298 395Q1341 408 1343 434Q1338 460 1290 474Q1230 489 1160 470Z" fill="url(#fillet)" strokeWidth=".8" />
      <path d="M753 330Q754 327 758 327L1161 461L1160 470L752 336Z" fill="#a9b7ca" />
      <path d="M758 327L886 260Q889 258 893 260L1298 395Q1336 410 1336 430Q1334 452 1290 465Q1225 480 1161 461Z" fill="#95a3ae" />
    </g>
    {holes.map(([x, y]) => (
      <g key={x} stroke={edge}>
        <ellipse cx={x} cy={y} rx="26.500" ry="11" fill="url(#hole)" />
        <path d={`M${x - 16} ${y + 9}Q${x} ${y + 4} ${x + 18} ${y + 8}`} fill="none" />
        <path d={`M${x - 16} ${y + 9}Q${x} ${y + 13} ${x + 18} ${y + 8}`} fill="none" />
      </g>
    ))}
    {smallHoles.map(([x, y]) => (
      <ellipse key={x} cx={x} cy={y} rx="19" ry="8" fill="url(#hole)" stroke={edge} />
    ))}

    {/* lower sensor body */}
    <path d="M1129 780V890A101 43 0 0 0 1331 890V780Z" fill="url(#can)" />
    <path d="M1129 888V891A101 42 0 0 0 1331 891V888" fill="none" stroke={edge} strokeWidth="1.500" />
    <path d="M1129 690V796A101 42 0 0 0 1331 796V690Z" fill="url(#darkCan)" stroke="#111" />
    <path d="M1129 784A101 42 0 0 0 1331 784M1129 787A101 42 0 0 0 1331 787" fill="none" stroke="#050505" />
    <path d="M1190 824Q1232 829 1262 824" fill="none" stroke="#777" strokeWidth=".7" />
    <path d="M1127 655V697A104 40 0 0 0 1335 697V655Z" fill="#111116" />
    {knurls.map((k) => (
      <path key={k.x} d={`M${k.x} ${k.top}V${k.bottom}`} stroke={k.tone} strokeWidth=".9" />
    ))}
    <g stroke="#08080a" strokeWidth="1.200" fill="#272727">
      <ellipse cx="1231" cy="655" rx="104" ry="42" />
      <ellipse cx="1232" cy="653" rx="93" ry="38" />
      <ellipse cx="1232" cy="653" rx="90" ry="36" fill="none" />
      <ellipse cx="1231" cy="652" rx="81" ry="33" strokeWidth="2" />
      <ellipse cx="1231" cy="652" rx="52" ry="22" />
      <ellipse cx="1231" cy="654" rx="46" ry="18" fill="#1b1b1b" />
      <path d="M1200 664a34 10 0 0 0 62 0M1196 660a38 12 0 0 0 70 0" fill="none" strokeWidth="2" />
      <path d="M1191 632V652A40 15 0 0 0 1271 652V632Z" fill="#242424" />
      <ellipse cx="1231" cy="632" rx="40" ry="15" />
      <ellipse cx="1232" cy="631" rx="22" ry="9" fill="#202020" />
      <ellipse cx="1167" cy="639" rx="5" ry="3" fill="#111" />
      <ellipse cx="1290" cy="635" rx="5" ry="3" fill="#111" />
      <ellipse cx="1237" cy="681" rx="5" ry="3" fill="#111" />
      <ellipse cx="1290" cy="709" rx="12" ry="14" fill="#303032" />
      <ellipse cx="1289" cy="708" rx="7" ry="9" fill="#1c1c1e" stroke="#444" />
      <ellipse cx="1289" cy="708" rx="3" ry="4" fill="#0b0b0b" />
    </g>
    <path d="M1217 615V631A14 5 0 0 0 1245 631V615Z" fill="url(#can)" />
    <path d="M1219 614V621H1243V614" fill="#a9b5c2" stroke="#222" />
    <path d="M1226 614h11v3h-11z" fill="#fff" />
    <path d="M1175 596Q1195 613 1231 613Q1267 613 1284 594L1280 588Q1230 612 1180 590Z" fill="url(#blueCone)" />
    <path d="M1175 596Q1195 613 1231 613Q1267 613 1284 594" fill="none" stroke="#02132c" />

    {/* leaders */}
    <g stroke="#33085e" fill="none">
      <path d="M870 274h11l7 8M984 327h-13l-9 8M924 774h11l8 7M777 812h11l9-7M1308 779h-7l-9 6" />
    </g>
    <g fill="#33085e">
      <path d="M879 273l4-1 2 6zM973 326l-4-1-3 7zM933 773l4-1 3 7zM786 813l4 1 3-6zM1303 778l-4-1-4 6z" />
    </g>
    {notes.map(([x, y, t]) => (
      <Note key={`${x}-${y}`} x={x} y={y}>{t}</Note>
    ))}
    <Tolerance x="1816" y="895">X.X+-0.1</Tolerance>
    <Tolerance x="1816" y="909">X.XX+-0.01</Tolerance>
    <Tolerance x="1817" y="923">X.XXX+-0.001</Tolerance>
    <Tolerance x="1811" y="938">ANG.+-0.5</Tolerance>
  </Scene>
);

/* ---------- bottom ---------- */

const Message = styled.div`
  display: flex;
  align-items: center;
  gap: 5px;
  height: 48px;
  padding-left: 109px;
  font-size: 11px;
  border-top: 1px solid ${line};
  &::before { content: ''; width: 5px; height: 5px; border-radius: 50%; background: #205d73; }
`;
const StatusBar = styled.footer`
  display: flex;
  align-items: center;
  height: 34px;
  padding: 0 14px 0 3px;
`;
const StatusToggle = styled(Toggle)`
  width: 26px;
  margin-right: 7px;
`;
const StatusIcon = styled(IconButton)`
  width: 20px;
  margin-right: 10px;
`;
const Rule = styled.i<{ $h: number; $gap: number }>`
  width: 1px;
  height: ${(p) => p.$h}px;
  margin-right: ${(p) => p.$gap}px;
  background: #c8cccc;
`;
const Fill = styled.div`
  flex: 1;
`;
const LeftTools = styled.div`
  display: flex;
  align-items: center;
  padding-right: 2px;
`;
const RightTools = styled.div`
  display: flex;
  align-items: center;
  height: 34px;
  padding-bottom: 3px;
`;
const FindTools = styled.div`
  display: flex;
  margin-right: 2px;
  padding-bottom: 3px;
`;
const Boxed = styled.button<{ $w: number; $h: number }>`
  display: flex;
  align-items: center;
  justify-content: center;
  width: ${(p) => p.$w}px;
  height: ${(p) => p.$h}px;
  border: 1px solid #bbbfc0;
  background: #fafafa;
  & + & { border-left: 0; }
`;
const FilterBox = styled.label`
  display: grid;
  grid-template-columns: 1fr 19px;
  align-items: center;
  justify-items: center;
  width: 169px;
  height: 30px;
  margin-left: 90px;
  border: 1px solid #a9adae;
  background: #f8f8f8;
`;
const FilterSelect = styled.select`
  appearance: none;
  width: 100%;
  height: 28px;
  padding: 0 9px;
  border: 0;
  border-right: 1px solid #a9adae;
  border-radius: 0;
  background: #f8f8f8;
`;

const floatIcons: [string, boolean?][] = [
  ['refit'], ['zoomIn'], ['zoomOut'], ['repaint'], ['shading', true], ['cubeLine', true], ['hexPage', true], ['manage'],
  ['perspective'], ['section', true], ['datum', true], ['noteEye'], ['nodes'], ['tri'], ['pause'], ['resume'],
];
const tree: [string, string][] = [
  ['plane', 'ASM_RIGHT'], ['plane', 'ASM_TOP'], ['plane', 'ASM_FRONT'], ['csys', 'ASM_DEF_CSYS'],
  ['partOff', '2043_015_P000001.PRT'], ['part', '2038_004_P000004.PRT'], ['part', '2038_004_P000007.PRT'],
  ['assembly', '2038_004_A000001.ASM'], ['part', '2038_004_P000006.PRT'],
];

export default function App() {
  return (
    <Page>
      <GlobalStyle />
      <TitleBar>
        <Brand>
          <Small name="assembly" />
          <span>creo·</span>
        </Brand>
        <Title>{'2043_015_A000001 Rev: 01.1+ Design  (Active) - Creo Parametric'}</Title>
        <WindowButtons>
          <IconButton aria-label="Minimize">
            <svg width="10" height="10"><path d="M1 7.500h8" stroke="#444" strokeWidth="2" /></svg>
          </IconButton>
          <IconButton aria-label="Restore">
            <svg width="11" height="10" fill="none" stroke="#444"><path d="M3.500 3V.5h7v5H8M.5 3.500h7v5h-7z" /></svg>
          </IconButton>
          <IconButton aria-label="Exit">
            <svg width="10" height="10"><path d="M1 1l8 8M9 1L1 9" stroke="#444" strokeWidth="1.400" /></svg>
          </IconButton>
        </WindowButtons>
      </TitleBar>

      <TabBar>
        <Tab $kind="file">File</Tab>
        {['Model', 'Analysis', 'Live Simulation', 'Annotate', 'Manikin', 'Tools', 'View', 'Framework', 'Applications'].map((t) => (
          <Tab key={t} $kind={t === 'View' ? 'active' : undefined}>{t}</Tab>
        ))}
        <TabTools>
          <IconButton aria-label="Collapse ribbon">
            <svg width="10" height="8"><path d="M1 6l4-4 4 4" fill="none" stroke="#fff" strokeWidth="2" /></svg>
          </IconButton>
          <IconButton aria-label="Search">
            <svg width="11" height="11"><circle cx="6.500" cy="4.500" r="3.200" fill="none" stroke="#fff" strokeWidth="1.400" /><path d="M4 7L1 10" stroke="#fff" strokeWidth="1.600" /></svg>
          </IconButton>
          <IconButton aria-label="Learning">
            <svg width="12" height="11" fill="#fff"><path d="M6 1l6 3-6 3-6-3zM2.500 6v3q3.500 2 7 0V6L6 8z" /></svg>
          </IconButton>
          <WhiteCaret />
          <IconButton aria-label="Help">?</IconButton>
        </TabTools>
      </TabBar>

      <Ribbon>
        <Group name="Visibility">
          <Big icon="layers" w={44} lines={['Layers']} />
          <Stack $w={86} $left={7}>
            <RowButton disabled><Small name="hide" />Hide</RowButton>
            <RowButton disabled><Small name="show" />Show<RowCaret /></RowButton>
            <RowButton><Small name="status" />Status<RowCaret /></RowButton>
          </Stack>
        </Group>
        <Group name="Appearance" menu end={6}>
          <Big icon="scenes" w={54} lines={['Scenes']} menu />
          <Big icon="sphere" w={74} lines={['Appearances']} menu />
        </Group>
        <Group name="Orientation" menu>
          <Big icon="refit" w={50} lines={['Refit']} />
          <Big icon="zoomSel" w={52} lines={['Zoom to', 'Selected']} off />
          <Big icon="zoomIn" w={50} lines={['Zoom', 'In']} />
          <Stack $w={91} $left={3}>
            <RowButton><Small name="pan" />Pan</RowButton>
            <RowButton><Small name="zoomOut" />Zoom Out</RowButton>
            <RowButton><Small name="panZoom" />Pan Zoom</RowButton>
          </Stack>
          <Divider />
          <Big icon="saved" w={91} lines={['Saved', 'Orientations']} menu />
          <Big icon="standard" w={66} lines={['Standard', 'Orientation']} />
          <Big icon="previous" w={64} lines={['Previous']} />
        </Group>
        <Group name="Model Display" menu end={5}>
          <Big icon="manage" w={62} lines={['Manage', 'Views']} menu />
          <Big icon="section" w={42} lines={['Section']} menu />
          <Stack $w={120} $left={11}>
            <RowButton><Small name="exploded" />Exploded View</RowButton>
            <RowButton disabled><Small name="toggle" />Toggle Status</RowButton>
            <RowButton><Small name="editPosition" />Edit Position</RowButton>
          </Stack>
          <Divider />
          <Big icon="display" w={54} lines={['Display', 'Style']} menu />
          <Big icon="perspective" w={68} lines={['Perspective', 'View']} />
        </Group>
        <Group name="Show" menu end={5}>
          <ShowGrid>
            {['planeEye', 'axisEye', 'pointsEye', 'csysEye', 'noteEye', 'dimEye'].map((n, i) => (
              <Toggle key={n} $on={i > 3} aria-label={n}><Small name={n} /></Toggle>
            ))}
            <span />
            {['planeTag', 'axisTag', 'pointsTag', 'csysTag', 'nodes', 'section'].map((n, i) => (
              <Toggle key={n} $on={i === 3} aria-label={n}><Small name={n} /></Toggle>
            ))}
            <IconButton aria-label="More"><Caret /></IconButton>
          </ShowGrid>
        </Group>
        <Group name="Window" menu end={2}>
          <Big icon="activate" w={60} lines={['Activate']} />
          <Big icon="close" w={40} lines={['Close']} />
          <Divider $left={9} />
          <Big icon="windows" w={64} lines={['Windows']} menu />
        </Group>
      </Ribbon>

      <QuickBar>
        <QuickButton $w={16} aria-label="New"><Small name="new" /></QuickButton>
        <QuickButton $w={40} aria-label="Open"><Small name="open" /></QuickButton>
        <QuickButton $w={16} aria-label="Save"><Small name="save" /></QuickButton>
        <QuickButton $w={40} aria-label="Undo"><Small name="undo" /></QuickButton>
        <QuickButton $w={4} aria-label="Undo list"><Caret /></QuickButton>
        <QuickButton $w={44} aria-label="Redo"><Small name="redo" /></QuickButton>
        <QuickButton $w={2} aria-label="Redo list"><Caret $dim /></QuickButton>
        <QuickButton $w={42} aria-label="Regenerate"><Small name="regen" /></QuickButton>
        <QuickButton $w={14} aria-label="Windows"><Small name="windows" /></QuickButton>
        <QuickButton $w={32} aria-label="Window list"><Caret /></QuickButton>
        <QuickButton $w={18} aria-label="Close window"><Small name="closeX" size={14} /></QuickButton>
        <QuickEnd>
          <IconButton aria-label="Customize"><Overflow /></IconButton>
        </QuickEnd>
      </QuickBar>

      <Main>
        <Side>
          <SideTabs>
            <SideTab $w={100} $on><Small name="treeTab" />Model Tree</SideTab>
            <SideTab $w={78}><Small name="folders" size={18} />Folder</SideTab>
            <SideTab $w={74}><Small name="favorites" />Favorit</SideTab>
          </SideTabs>
          <TreeHead>
            <TreeTitle>Model Tree</TreeTitle>
            <HeadTool>
              <IconButton aria-label="Settings"><Small name="tools" size={18} /></IconButton>
              <IconButton aria-label="Settings list"><Caret /></IconButton>
            </HeadTool>
            <HeadTool>
              <IconButton aria-label="Display list"><Small name="listPage" size={18} /></IconButton>
              <IconButton aria-label="Display options"><Caret /></IconButton>
            </HeadTool>
            <HeadTool>
              <IconButton aria-label="Hide tree"><Small name="treeEye" size={20} /></IconButton>
              <span />
            </HeadTool>
          </TreeHead>
          <Search>
            <Small name="funnel" />
            <Field>
              <input type="text" aria-label="Filter tree" />
              <IconButton aria-label="Clear">
                <svg width="8" height="8"><path d="M0 0l8 8M8 0L0 8" stroke="#999" strokeWidth="1.400" /></svg>
              </IconButton>
            </Field>
            <Caret />
            <IconButton aria-label="Add"><Small name="plus" /></IconButton>
          </Search>
          <TreeTop><span><Small name="gear" /></span></TreeTop>
          <Tree>
            <TreeRow>
              <RootMark><Small name="plusBlue" /></RootMark>
              <span />
              <Small name="assembly" size={15} />
              <Name>2043_015_A000001.ASM</Name>
            </TreeRow>
            {tree.map(([icon, name], i) => (
              <TreeRow key={name} $deep $dim={icon === 'partOff'}>
                <span />
                {i > 3 ? <Twist /> : <span />}
                <Small name={icon} size={icon === 'assembly' ? 15 : 16} />
                <Name>{name}</Name>
              </TreeRow>
            ))}
          </Tree>
        </Side>
        <Stage>
          <Model />
          <FloatBar>
            {floatIcons.map(([n, more]) => (
              <Toggle key={n} $on={n === 'noteEye'} aria-label={n}>
                <Small name={n} />
                {more && <Corner />}
              </Toggle>
            ))}
          </FloatBar>
        </Stage>
      </Main>

      <Message>Showing surface created by feature 6 (BASE), model 2043_015_P000001.</Message>
      <StatusBar>
        <LeftTools>
          <StatusToggle $on aria-label="Navigator"><Small name="panelEye" /></StatusToggle>
          <StatusIcon aria-label="Browser"><Small name="globe" /></StatusIcon>
          <StatusIcon aria-label="Full screen"><Small name="blank" /></StatusIcon>
        </LeftTools>
        <Rule $h={28} $gap={0} />
        <Fill />
        <RightTools>
          <Rule $h={34} $gap={4} />
          <Rule $h={34} $gap={2} />
          <FindTools>
            <Boxed $w={32} $h={28} aria-label="Find"><Small name="binoculars" /></Boxed>
            <Boxed $w={18} $h={28} aria-label="Find options"><Caret /></Boxed>
          </FindTools>
          <Rule $h={34} $gap={2} />
          <Boxed $w={44} $h={32} aria-label="Selection box"><Small name="boxFilter" size={18} /></Boxed>
          <FilterBox>
            <FilterSelect aria-label="Selection filter" defaultValue="Geometry">
              <option>Geometry</option>
            </FilterSelect>
            <Caret />
          </FilterBox>
        </RightTools>
      </StatusBar>
    </Page>
  );
}
